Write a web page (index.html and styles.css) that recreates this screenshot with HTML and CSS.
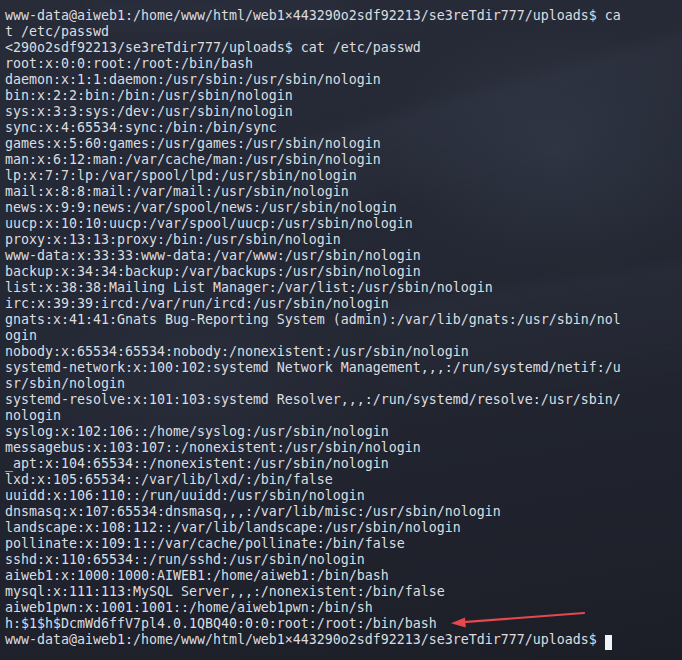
FILE: index.html
```html
<!DOCTYPE html>
<html>
<head>
<meta charset="utf-8">
<link rel="stylesheet" href="styles.css">
</head>
<body>
<div class="term">
<div class="bg-shape shape-a"></div>
<div class="bg-shape shape-b"></div>
<div class="bg-shape shape-c"></div>
<pre class="out">www-data@aiweb1:/home/www/html/web1×443290o2sdf92213/se3reTdir777/uploads$ ca
t /etc/passwd
&lt;290o2sdf92213/se3reTdir777/uploads$ cat /etc/passwd
root:x:0:0:root:/root:/bin/bash
daemon:x:1:1:daemon:/usr/sbin:/usr/sbin/nologin
bin:x:2:2:bin:/bin:/usr/sbin/nologin
sys:x:3:3:sys:/dev:/usr/sbin/nologin
sync:x:4:65534:sync:/bin:/bin/sync
games:x:5:60:games:/usr/games:/usr/sbin/nologin
man:x:6:12:man:/var/cache/man:/usr/sbin/nologin
lp:x:7:7:lp:/var/spool/lpd:/usr/sbin/nologin
mail:x:8:8:mail:/var/mail:/usr/sbin/nologin
news:x:9:9:news:/var/spool/news:/usr/sbin/nologin
uucp:x:10:10:uucp:/var/spool/uucp:/usr/sbin/nologin
proxy:x:13:13:proxy:/bin:/usr/sbin/nologin
www-data:x:33:33:www-data:/var/www:/usr/sbin/nologin
backup:x:34:34:backup:/var/backups:/usr/sbin/nologin
list:x:38:38:Mailing List Manager:/var/list:/usr/sbin/nologin
irc:x:39:39:ircd:/var/run/ircd:/usr/sbin/nologin
gnats:x:41:41:Gnats Bug-Reporting System (admin):/var/lib/gnats:/usr/sbin/nol
ogin
nobody:x:65534:65534:nobody:/nonexistent:/usr/sbin/nologin
systemd-network:x:100:102:systemd Network Management,,,:/run/systemd/netif:/u
sr/sbin/nologin
systemd-resolve:x:101:103:systemd Resolver,,,:/run/systemd/resolve:/usr/sbin/
nologin
syslog:x:102:106::/home/syslog:/usr/sbin/nologin
messagebus:x:103:107::/nonexistent:/usr/sbin/nologin
_apt:x:104:65534::/nonexistent:/usr/sbin/nologin
lxd:x:105:65534::/var/lib/lxd/:/bin/false
uuidd:x:106:110::/run/uuidd:/usr/sbin/nologin
dnsmasq:x:107:65534:dnsmasq,,,:/var/lib/misc:/usr/sbin/nologin
landscape:x:108:112::/var/lib/landscape:/usr/sbin/nologin
pollinate:x:109:1::/var/cache/pollinate:/bin/false
sshd:x:110:65534::/run/sshd:/usr/sbin/nologin
aiweb1:x:1000:1000:AIWEB1:/home/aiweb1:/bin/bash
mysql:x:111:113:MySQL Server,,,:/nonexistent:/bin/false
aiweb1pwn:x:1001:1001::/home/aiweb1pwn:/bin/sh
h:$1$h$DcmWd6ffV7pl4.0.1QBQ40:0:0:root:/root:/bin/bash
www-data@aiweb1:/home/www/html/web1×443290o2sdf92213/se3reTdir777/uploads$ <span class="cursor"> </span></pre>
<svg class="arrow" width="682" height="660" viewBox="0 0 682 660">
<line x1="584" y1="613" x2="460" y2="622.4" stroke="#e5484d" stroke-width="2.2" stroke-linecap="round"/>
<polygon points="451,623.2 465,617.6 465.8,627.4" fill="#e5484d"/>
</svg>
</div>
</body>
</html>
```
FILE: styles.css
```css
html, body {
  margin: 0;
  padding: 0;
}
body {
  width: 682px;
  height: 660px;
  overflow: hidden;
  background: #20232d;
}
.term {
  position: relative;
  width: 682px;
  height: 660px;
  overflow: hidden;
  background:
    radial-gradient(ellipse 260px 180px at 560px 150px, rgba(70, 78, 98, 0.30), transparent 70%),
    radial-gradient(ellipse 300px 200px at 200px 380px, rgba(60, 66, 84, 0.25), transparent 70%),
    linear-gradient(170deg, #282c38 0%, #242834 40%, #20232d 75%, #1c1e27 100%);
}
.bg-shape {
  position: absolute;
  pointer-events: none;
  filter: blur(6px);
}
.shape-a {
  left: 300px;
  top: 70px;
  width: 520px;
  height: 90px;
  background: linear-gradient(180deg, rgba(60, 66, 84, 0.22), rgba(40, 44, 56, 0));
  transform: rotate(-16deg);
}
.shape-b {
  left: 380px;
  top: 280px;
  width: 340px;
  height: 120px;
  background: linear-gradient(180deg, rgba(48, 53, 68, 0.30), rgba(30, 33, 42, 0));
  transform: rotate(-8deg);
}
.shape-c {
  left: 90px;
  top: 0px;
  width: 260px;
  height: 30px;
  background: rgba(50, 56, 72, 0.22);
  border-radius: 20px;
}
.out {
  position: relative;
  margin: 0;
  padding: 8px 0 0 5px;
  font-family: "DejaVu Sans Mono", "Liberation Mono", monospace;
  font-size: 13.29px;
  line-height: 16px;
  color: #dcdde1;
  white-space: pre;
}
.cursor {
  display: inline-block;
  width: 7px;
  height: 15px;
  vertical-align: -3px;
  background: #f2f3f7;
}
.arrow {
  position: absolute;
  left: 0;
  top: 0;
  pointer-events: none;
}
```
